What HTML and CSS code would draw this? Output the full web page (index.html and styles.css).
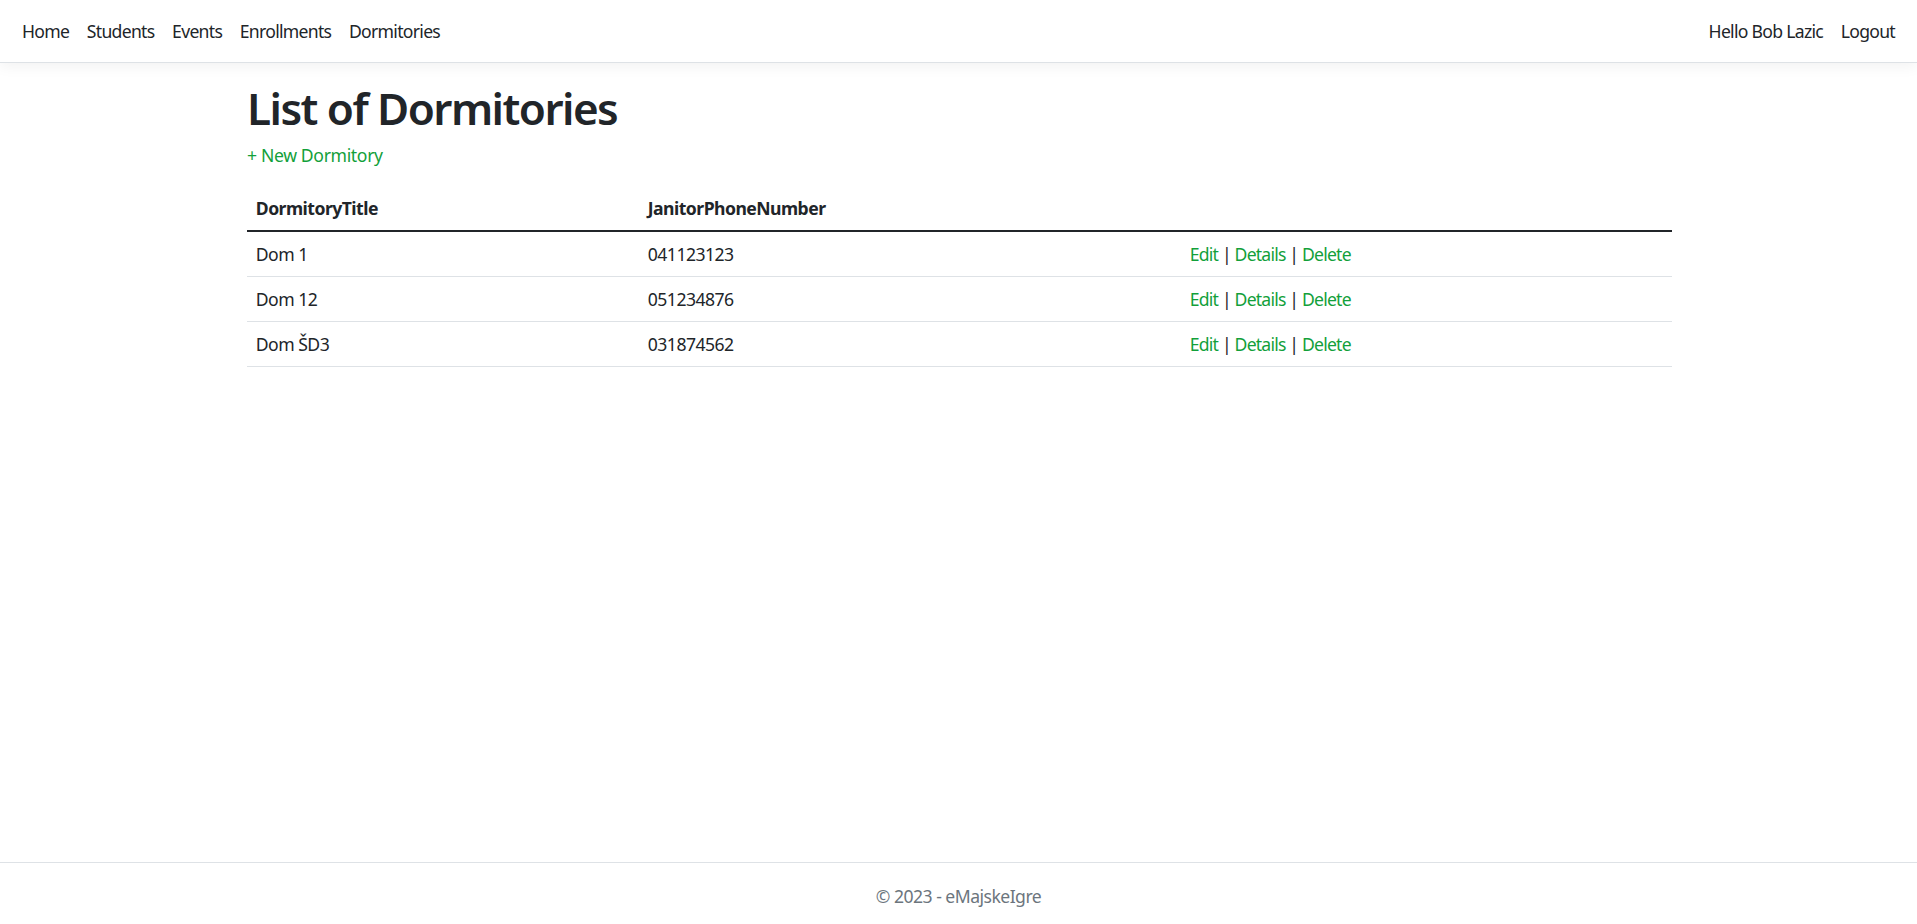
FILE: index.html
```html
<!DOCTYPE html>
<html lang="en">
<head>
<meta charset="utf-8">
<title>List of Dormitories - eMajskeIgre</title>
<link rel="stylesheet" href="styles.css">
</head>
<body>
<header class="navbar">
  <nav class="nav-left">
    <a class="nav-link" href="#">Home</a>
    <a class="nav-link" href="#">Students</a>
    <a class="nav-link" href="#">Events</a>
    <a class="nav-link" href="#">Enrollments</a>
    <a class="nav-link" href="#">Dormitories</a>
  </nav>
  <nav class="nav-right">
    <a class="nav-link" href="#">Hello Bob Lazic</a>
    <button class="nav-link btn-link" type="button">Logout</button>
  </nav>
</header>
<main class="container">
  <h1 class="title">List of Dormitories</h1>
  <p class="create"><a class="link" href="#">+ New Dormitory</a></p>
  <table class="table">
    <thead>
      <tr>
        <th class="col-title">DormitoryTitle</th>
        <th class="col-phone">JanitorPhoneNumber</th>
        <th></th>
      </tr>
    </thead>
    <tbody>
      <tr>
        <td>Dom 1</td>
        <td>041123123</td>
        <td class="actions"><a class="link" href="#">Edit</a> | <a class="link" href="#">Details</a> | <a class="link" href="#">Delete</a></td>
      </tr>
      <tr>
        <td>Dom 12</td>
        <td>051234876</td>
        <td class="actions"><a class="link" href="#">Edit</a> | <a class="link" href="#">Details</a> | <a class="link" href="#">Delete</a></td>
      </tr>
      <tr>
        <td>Dom ŠD3</td>
        <td>031874562</td>
        <td class="actions"><a class="link" href="#">Edit</a> | <a class="link" href="#">Details</a> | <a class="link" href="#">Delete</a></td>
      </tr>
    </tbody>
  </table>
</main>
<footer class="footer">© 2023 - eMajskeIgre</footer>
</body>
</html>
```

FILE: styles.css
```css
* { box-sizing: border-box; }
html, body { margin: 0; padding: 0; }
body {
  font-family: "Noto Sans", "Open Sans", sans-serif;
  font-size: 17.6px;
  letter-spacing: -0.03em;
  line-height: 1.5;
  color: #212529;
  background: #fff;
  min-height: 100vh;
  display: flex;
  flex-direction: column;
  overflow: hidden;
}
.navbar {
  display: flex;
  justify-content: space-between;
  align-items: center;
  padding: 8.8px 13.2px;
  background: #fff;
  border-bottom: 1px solid #dee2e6;
  box-shadow: 0 4.4px 13.2px rgba(0,0,0,.05);
  margin-bottom: 17.6px;
}
.nav-left, .nav-right { display: flex; align-items: center; }
.nav-link {
  display: block;
  padding: 8.8px;
  color: #212529;
  text-decoration: none;
  font: inherit;
  letter-spacing: -0.04em;
  line-height: 26.4px;
}
.btn-link { background: none; border: 0; cursor: pointer; }
.container {
  flex: 1;
  width: 1425px;
  margin: 0 auto 0 247px;
}
.title {
  margin: 0 0 7.5px;
  padding-top: 2px;
  font-size: 44px;
  font-weight: 600;
  line-height: 1.2;
  letter-spacing: -0.035em;
}
.create { margin: 0 0 17.6px; letter-spacing: -0.02em; }
.link { color: #12a03a; text-decoration: none; }
.table {
  width: 100%;
  border-collapse: collapse;
}
.table th, .table td {
  padding: 8.8px;
  text-align: left;
  vertical-align: top;
  border-bottom: 1px solid #dee2e6;
}
.table th { font-weight: 700; border-bottom: 2px solid #212529; }
.table td.actions { letter-spacing: -0.045em; }
.col-title { width: 392px; }
.col-phone { width: 542px; }
.footer {
  height: 62px;
  line-height: 66px;
  border-top: 1px solid #dee2e6;
  color: #6c757d;
  text-align: center;
  white-space: nowrap;
  overflow: hidden;
}
```
